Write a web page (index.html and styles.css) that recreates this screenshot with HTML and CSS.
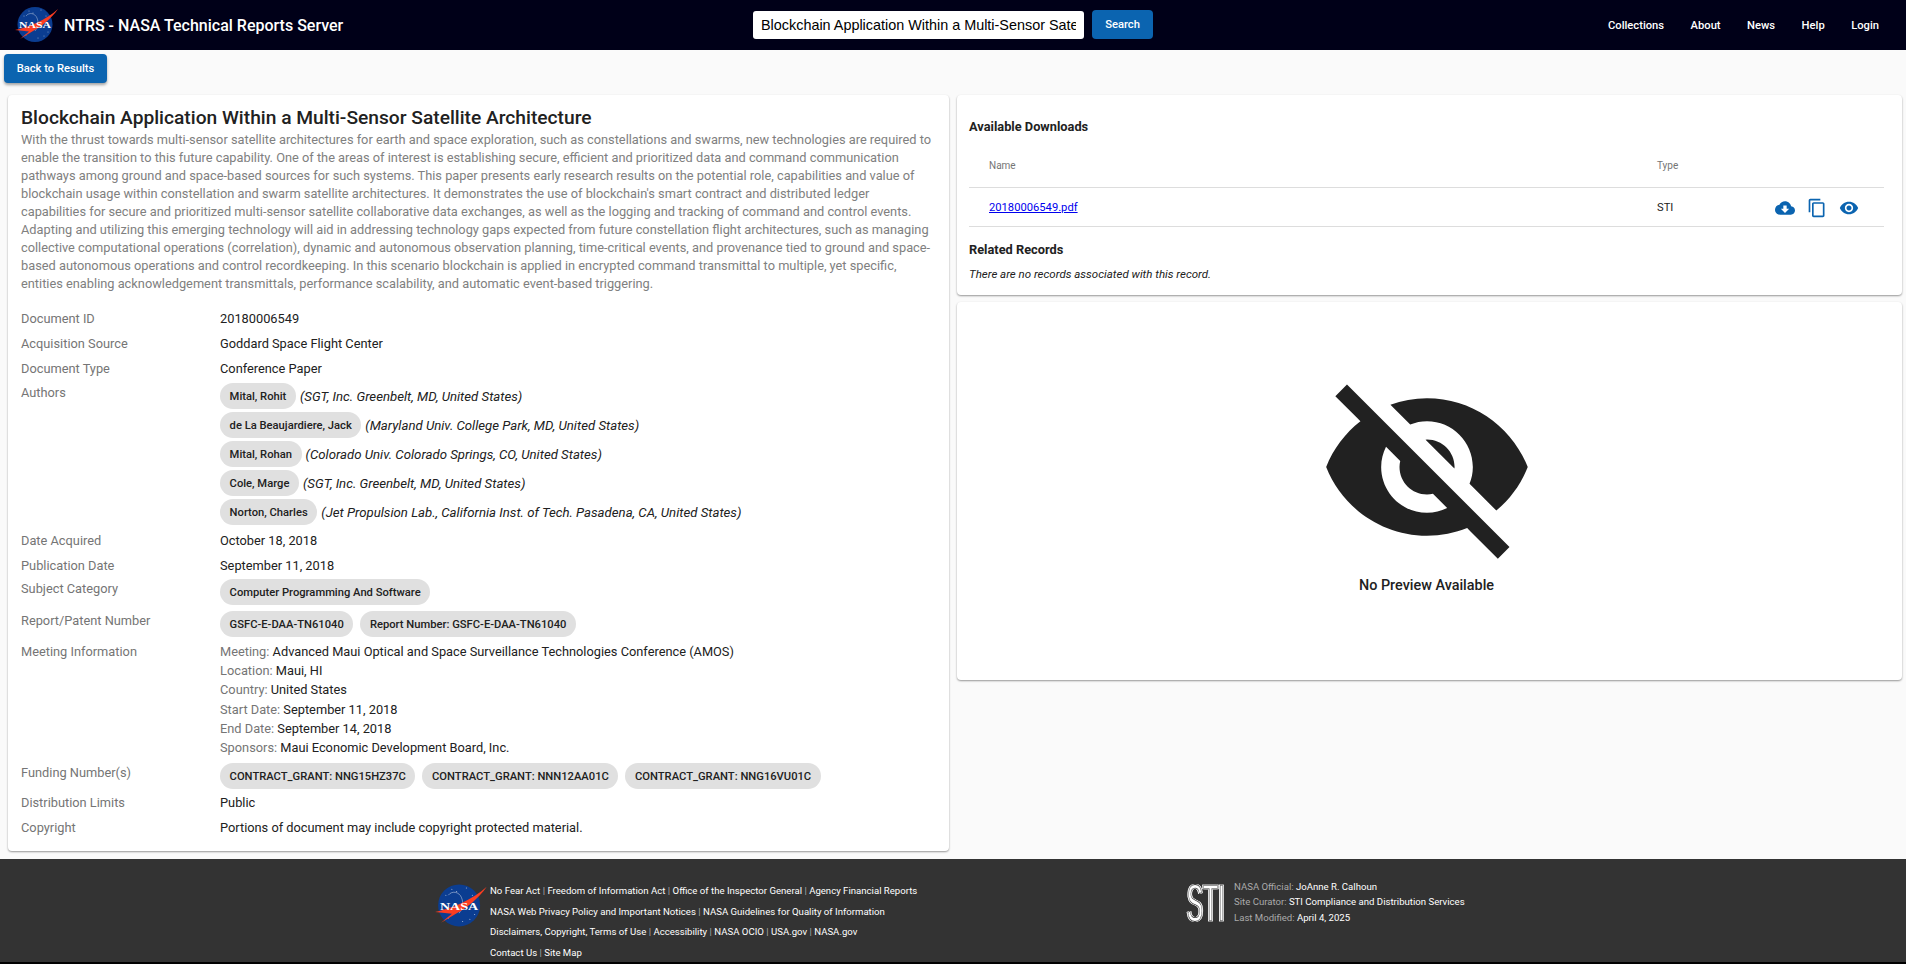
FILE: index.html
```html
<!DOCTYPE html>
<html>
<head>
    <meta charset="utf-8">
    <title>NTRS - NASA Technical Reports Server</title>
    <link rel="stylesheet" href="styles.css">
</head>
<body>
    <div class="header">
        <div class="brand">
            <svg class="nasa-logo" viewBox="0 0 44 40">
                <circle cx="20" cy="19.5" r="17.5" fill="#0b3d91"/>
                <g fill="#fff">
                    <circle cx="9" cy="11" r=".4"/><circle cx="14" cy="6" r=".4"/><circle cx="26" cy="5" r=".4"/>
                    <circle cx="31" cy="11" r=".4"/><circle cx="11" cy="30" r=".4"/><circle cx="29" cy="31" r=".4"/>
                    <circle cx="23" cy="33" r=".4"/><circle cx="33" cy="27" r=".4"/><circle cx="18" cy="8" r=".4"/>
                </g>
                <path d="M11 11c3-4 9-3 11 2 2 5 1 9-2 13" fill="none" stroke="#fff" stroke-width=".35"/>
                <path d="M0 25C14 22 31 15 43 4 36 14 26 22 18 26L5 34 14 26.5Z" fill="#fc3d21"/>
                <text class="nasa-word" x="20" y="23" textLength="32" lengthAdjust="spacingAndGlyphs">NASA</text>
            </svg>
            <span class="brand-title">NTRS - NASA Technical Reports Server</span>
        </div>
        <div class="search">
            <input class="search-input" type="text" value="Blockchain Application Within a Multi-Sensor Satellite Architecture">
            <button class="btn search-btn">Search</button>
        </div>
        <div class="nav">
            <a>Collections</a>
            <a>About</a>
            <a>News</a>
            <a>Help</a>
            <a>Login</a>
        </div>
    </div>

    <div class="main">
        <button class="btn back-btn">Back to Results</button>
        <div class="columns">
            <div class="card record">
                <h1 class="record-title">Blockchain Application Within a Multi-Sensor Satellite Architecture</h1>
                <p class="abstract">With the thrust towards multi-sensor satellite architectures for earth and space exploration, such as constellations and swarms, new technologies are required to enable the transition to this future capability. One of the areas of interest is establishing secure, efficient and prioritized data and command communication pathways among ground and space-based sources for such systems. This paper presents early research results on the potential role, capabilities and value of blockchain usage within constellation and swarm satellite architectures. It demonstrates the use of blockchain's smart contract and distributed ledger capabilities for secure and prioritized multi-sensor satellite collaborative data exchanges, as well as the logging and tracking of command and control events. Adapting and utilizing this emerging technology will aid in addressing technology gaps expected from future constellation flight architectures, such as managing collective computational operations (correlation), dynamic and autonomous observation planning, time-critical events, and provenance tied to ground and space-based autonomous operations and control recordkeeping. In this scenario blockchain is applied in encrypted command transmittal to multiple, yet specific, entities enabling acknowledgement transmittals, performance scalability, and automatic event-based triggering.</p>

                <div class="field">
                    <div class="field-label">Document ID</div>
                    <div class="field-value">20180006549</div>
                </div>
                <div class="field">
                    <div class="field-label">Acquisition Source</div>
                    <div class="field-value">Goddard Space Flight Center</div>
                </div>
                <div class="field">
                    <div class="field-label">Document Type</div>
                    <div class="field-value">Conference Paper</div>
                </div>
                <div class="field field-chips field-authors">
                    <div class="field-label">Authors</div>
                    <div class="field-value authors">
                        <div class="author"><span class="chip">Mital, Rohit</span><em>(SGT, Inc. Greenbelt, MD, United States)</em></div>
                        <div class="author"><span class="chip">de La Beaujardiere, Jack</span><em>(Maryland Univ. College Park, MD, United States)</em></div>
                        <div class="author"><span class="chip">Mital, Rohan</span><em>(Colorado Univ. Colorado Springs, CO, United States)</em></div>
                        <div class="author"><span class="chip">Cole, Marge</span><em>(SGT, Inc. Greenbelt, MD, United States)</em></div>
                        <div class="author"><span class="chip">Norton, Charles</span><em>(Jet Propulsion Lab., California Inst. of Tech. Pasadena, CA, United States)</em></div>
                    </div>
                </div>
                <div class="field">
                    <div class="field-label">Date Acquired</div>
                    <div class="field-value">October 18, 2018</div>
                </div>
                <div class="field">
                    <div class="field-label">Publication Date</div>
                    <div class="field-value">September 11, 2018</div>
                </div>
                <div class="field field-chips">
                    <div class="field-label">Subject Category</div>
                    <div class="field-value chip-row"><span class="chip">Computer Programming And Software</span></div>
                </div>
                <div class="field field-chips">
                    <div class="field-label">Report/Patent Number</div>
                    <div class="field-value chip-row"><span class="chip">GSFC-E-DAA-TN61040</span><span class="chip">Report Number: GSFC-E-DAA-TN61040</span></div>
                </div>
                <div class="field field-meeting">
                    <div class="field-label">Meeting Information</div>
                    <div class="field-value">
                        <div><span class="muted">Meeting:</span> Advanced Maui Optical and Space Surveillance Technologies Conference (AMOS)</div>
                        <div><span class="muted">Location:</span> Maui, HI</div>
                        <div><span class="muted">Country:</span> United States</div>
                        <div><span class="muted">Start Date:</span> September 11, 2018</div>
                        <div><span class="muted">End Date:</span> September 14, 2018</div>
                        <div><span class="muted">Sponsors:</span> Maui Economic Development Board, Inc.</div>
                    </div>
                </div>
                <div class="field field-chips field-funding">
                    <div class="field-label">Funding Number(s)</div>
                    <div class="field-value chip-row"><span class="chip">CONTRACT_GRANT: NNG15HZ37C</span><span class="chip">CONTRACT_GRANT: NNN12AA01C</span><span class="chip">CONTRACT_GRANT: NNG16VU01C</span></div>
                </div>
                <div class="field">
                    <div class="field-label">Distribution Limits</div>
                    <div class="field-value">Public</div>
                </div>
                <div class="field">
                    <div class="field-label">Copyright</div>
                    <div class="field-value">Portions of document may include copyright protected material.</div>
                </div>
            </div>

            <div class="side">
                <div class="card downloads">
                    <h2 class="section-title">Available Downloads</h2>
                    <div class="dl-row dl-head">
                        <div class="dl-name">Name</div>
                        <div class="dl-type">Type</div>
                    </div>
                    <div class="dl-row dl-body">
                        <div class="dl-name"><a href="#">20180006549.pdf</a></div>
                        <div class="dl-type">STI</div>
                        <div class="dl-icons">
                            <svg viewBox="0 0 24 24"><path d="M19.35 10.04C18.67 6.59 15.64 4 12 4 9.11 4 6.6 5.64 5.35 8.04 2.34 8.36 0 10.91 0 14c0 3.31 2.69 6 6 6h13c2.76 0 5-2.24 5-5 0-2.64-2.05-4.78-4.65-4.96zM17 13l-5 5-5-5h3V9h4v4h3z"/></svg>
                            <svg viewBox="0 0 24 24"><path d="M16 1H4c-1.1 0-2 .9-2 2v14h2V3h12V1zm3 4H8c-1.1 0-2 .9-2 2v14c0 1.1.9 2 2 2h11c1.1 0 2-.9 2-2V7c0-1.1-.9-2-2-2zm0 16H8V7h11v14z"/></svg>
                            <svg viewBox="0 0 24 24"><path d="M12 4.5C7 4.5 2.73 7.61 1 12c1.73 4.39 6 7.5 11 7.5s9.27-3.11 11-7.5c-1.73-4.39-6-7.5-11-7.5zM12 17c-2.76 0-5-2.24-5-5s2.24-5 5-5 5 2.24 5 5-2.24 5-5 5zm0-8c-1.66 0-3 1.34-3 3s1.34 3 3 3 3-1.34 3-3-1.34-3-3-3z"/></svg>
                        </div>
                    </div>
                    <h2 class="section-title related-title">Related Records</h2>
                    <p class="no-records">There are no records associated with this record.</p>
                </div>
                <div class="card preview">
                    <svg class="preview-icon" viewBox="0 0 24 24"><path d="M12 7c2.76 0 5 2.24 5 5 0 .65-.13 1.26-.36 1.83l2.92 2.92c1.51-1.26 2.7-2.89 3.43-4.75-1.73-4.39-6-7.5-11-7.5-1.4 0-2.74.25-3.98.7l2.16 2.16C10.74 7.13 11.35 7 12 7zM2 4.27l2.28 2.28.46.46C3.08 8.3 1.78 10.02 1 12c1.73 4.39 6 7.5 11 7.5 1.55 0 3.03-.3 4.38-.84l.42.42L19.73 22 21 20.73 3.27 3 2 4.27zM7.53 9.8l1.55 1.55c-.05.21-.08.43-.08.65 0 1.66 1.34 3 3 3 .22 0 .44-.03.65-.08l1.55 1.55c-.67.33-1.41.53-2.2.53-2.76 0-5-2.24-5-5 0-.79.2-1.53.53-2.2zm4.31-.78l3.15 3.15.02-.16c0-1.66-1.34-3-3-3l-.17.01z"/></svg>
                    <div class="preview-text">No Preview Available</div>
                </div>
            </div>
        </div>
    </div>

    <div class="footer">
        <div class="footer-links-wrap">
            <svg class="nasa-logo-small" viewBox="0 0 44 40">
                <circle cx="20" cy="19.5" r="17.5" fill="#0b3d91"/>
                <g fill="#fff">
                    <circle cx="9" cy="11" r=".4"/><circle cx="14" cy="6" r=".4"/><circle cx="26" cy="5" r=".4"/>
                    <circle cx="31" cy="11" r=".4"/><circle cx="11" cy="30" r=".4"/><circle cx="29" cy="31" r=".4"/>
                    <circle cx="23" cy="33" r=".4"/><circle cx="33" cy="27" r=".4"/><circle cx="18" cy="8" r=".4"/>
                </g>
                <path d="M11 11c3-4 9-3 11 2 2 5 1 9-2 13" fill="none" stroke="#fff" stroke-width=".35"/>
                <path d="M0 25C14 22 31 15 43 4 36 14 26 22 18 26L5 34 14 26.5Z" fill="#fc3d21"/>
                <text class="nasa-word" x="20" y="23" textLength="32" lengthAdjust="spacingAndGlyphs">NASA</text>
            </svg>
            <div class="footer-links">
                <div><a>No Fear Act</a> <i>|</i> <a>Freedom of Information Act</a> <i>|</i> <a>Office of the Inspector General</a> <i>|</i> <a>Agency Financial Reports</a></div>
                <div><a>NASA Web Privacy Policy and Important Notices</a> <i>|</i> <a>NASA Guidelines for Quality of Information</a></div>
                <div><a>Disclaimers, Copyright, Terms of Use</a> <i>|</i> <a>Accessibility</a> <i>|</i> <a>NASA OCIO</a> <i>|</i> <a>USA.gov</a> <i>|</i> <a>NASA.gov</a></div>
                <div><a>Contact Us</a> <i>|</i> <a>Site Map</a></div>
            </div>
        </div>
        <div class="footer-sti">
            <svg class="sti-logo" viewBox="0 0 40 40">
                <text class="sti-word" x="42" y="38" transform="scale(.47 1)">STI</text>
            </svg>
            <div class="sti-info">
                <div><span>NASA Official:</span> JoAnne R. Calhoun</div>
                <div><span>Site Curator:</span> STI Compliance and Distribution Services</div>
                <div><span>Last Modified:</span> April 4, 2025</div>
            </div>
        </div>
    </div>
</body>
</html>
```

FILE: styles.css
```css
* {
    box-sizing: border-box;
}
html, body {
    margin: 0;
    height: 964px;
    overflow: hidden;
}
body {
    display: flex;
    flex-direction: column;
    font-family: Roboto, 'Noto Sans', sans-serif;
    font-size: 12.8px;
    color: #212121;
    background: #fafafa;
}
.header {
    height: 50px;
    flex: none;
    background: #000018;
    color: white;
    position: relative;
    display: flex;
    align-items: center;
    justify-content: space-between;
    padding: 0 27px 0 15px;
}
.brand {
    display: flex;
    align-items: center;
    gap: 5px;
}
.nasa-logo {
    width: 44px;
    height: 40px;
}
.nasa-word {
    font-family: 'Liberation Serif', serif;
    font-weight: bold;
    font-size: 9px;
    fill: #fff;
    text-anchor: middle;
}
.brand-title {
    font-size: 16px;
    font-weight: 500;
}
.search {
    position: absolute;
    left: 753px;
    top: 10px;
    display: flex;
    gap: 8px;
}
.search-input {
    width: 331px;
    height: 28px;
    margin-top: 1px;
    padding: 0 8px;
    border: none;
    border-radius: 3px;
    font-family: 'Liberation Sans', sans-serif;
    font-size: 14.4px;
    color: #000;
    background: white;
    outline: none;
}
.btn {
    border: none;
    border-radius: 4px;
    background: #0b64b0;
    color: white;
    font-family: Roboto, sans-serif;
    font-size: 11.2px;
    font-weight: 500;
    cursor: pointer;
}
.search-btn {
    width: 61px;
    height: 29px;
}
.nav {
    display: flex;
    gap: 26.5px;
    font-size: 11.2px;
    font-weight: 500;
}
.main {
    flex: 1;
    min-height: 0;
    padding: 4px 4px 0 8px;
}
.back-btn {
    display: block;
    width: 103px;
    height: 29px;
    margin-left: -4px;
    box-shadow: 0 2px 3px rgba(0,0,0,0.35);
}
.columns {
    display: grid;
    grid-template-columns: 941px 945px;
    gap: 8px;
    margin-top: 12px;
    align-items: start;
}
.card {
    background: white;
    border-radius: 4px;
    box-shadow: 0 1px 2px rgba(0,0,0,0.4);
}
.record {
    height: 756px;
    padding: 11px 13px;
}
.record-title {
    margin: 0;
    font-size: 19.2px;
    font-weight: 500;
    line-height: 24px;
}
.abstract {
    margin: 1px 0 13px;
    font-size: 12.8px;
    line-height: 18px;
    color: #808080;
}
.field {
    display: grid;
    grid-template-columns: 199px 1fr;
    line-height: 25px;
}
.field-label {
    color: #757575;
}
.field-chips {
    line-height: 19px;
}
.field-chips .field-label {
    padding-top: 1px;
}
.field-authors .field-label {
    padding-top: 2px;
}
.field-meeting {
    line-height: 19.2px;
}
.field-funding {
    margin-top: 5px;
}
.field-funding .chip-row {
    margin-bottom: 1px;
}
.muted {
    color: #757575;
}
.authors {
    padding-top: 2px;
}
.author {
    display: flex;
    align-items: center;
    gap: 4px;
    margin-bottom: 3px;
}
.author em {
    font-size: 13.2px;
}
.chip {
    display: inline-flex;
    align-items: center;
    height: 26px;
    padding: 0 9.6px;
    border-radius: 13px;
    background: #e0e0e0;
    font-size: 11.2px;
    font-weight: 500;
}
.chip-row {
    display: flex;
    gap: 7px;
    padding-top: 1px;
    margin-bottom: 5px;
}
.side {
    display: flex;
    flex-direction: column;
    gap: 7px;
}
.downloads {
    height: 200px;
    padding: 24px 18px 0 12px;
}
.section-title {
    margin: 0;
    font-size: 12.8px;
    font-weight: 700;
    line-height: 16px;
}
.dl-row {
    display: grid;
    grid-template-columns: 668px 100px 1fr;
    padding-left: 20px;
    border-bottom: 1px solid #ddd;
    align-items: center;
}
.dl-head {
    height: 53px;
    padding-top: 8px;
    font-size: 10px;
    color: #757575;
}
.dl-body {
    height: 39px;
    font-size: 11.2px;
}
.dl-icons {
    display: flex;
    gap: 12px;
    padding-left: 18px;
    margin-top: 2px;
}
.dl-icons svg {
    width: 20px;
    height: 20px;
    fill: #0b64b0;
}
.related-title {
    margin-top: 15px;
}
.no-records {
    margin: 9px 0 0;
    font-size: 11.5px;
    font-style: italic;
    line-height: 14px;
}
.preview {
    height: 378px;
    padding-right: 6px;
    display: flex;
    flex-direction: column;
    align-items: center;
}
.preview-icon {
    width: 220px;
    height: 220px;
    margin-top: 55px;
    fill: #212121;
}
.preview-text {
    font-size: 14.4px;
    font-weight: 500;
}
.footer {
    height: 105px;
    flex: none;
    background: #333;
    border-bottom: 2px solid #000;
    display: flex;
    color: white;
    font-size: 9.6px;
}
.footer-links-wrap {
    display: flex;
    margin-left: 435px;
    padding-top: 22px;
}
.nasa-logo-small {
    width: 53px;
    height: 48px;
    margin-top: 1px;
}
.footer-links {
    margin-left: 2px;
    line-height: 20.7px;
}
.footer-links i {
    font-style: normal;
    color: #aaa;
}
.footer-sti {
    display: flex;
    position: absolute;
    left: 1186px;
    top: 883px;
}
.sti-logo {
    width: 40px;
    height: 40px;
    overflow: visible;
    filter: drop-shadow(1px 0 0 #fff) drop-shadow(-1px 0 0 #fff);
}
.sti-word {
    font-family: 'Liberation Sans', sans-serif;
    font-size: 52px;
    text-anchor: middle;
    fill: #fff;
    stroke: #333;
    stroke-width: .8;
}
.sti-info {
    margin-left: 8px;
    margin-top: -4px;
    line-height: 15.3px;
}
.sti-info span {
    color: #aaa;
}
```
